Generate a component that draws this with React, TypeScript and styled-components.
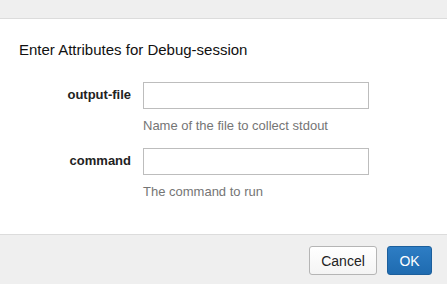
import styled, { createGlobalStyle } from "styled-components";

const GlobalStyle = createGlobalStyle`
  html, body {
    margin: 0;
    padding: 0;
    background: #ffffff;
  }
  body {
    font-family: "Liberation Sans", Arial, sans-serif;
    color: #222222;
  }
`;

const fields = [
  { name: "output-file", help: "Name of the file to collect stdout" },
  { name: "command", help: "The command to run" },
];

export default function App() {
  return (
    <>
      <GlobalStyle />
      <Frame>
        <TopBar />
        <Body>
          <Title>Enter Attributes for Debug-session</Title>
          <Form>
            {fields.map((f) => (
              <Field key={f.name}>
                <Label>{f.name}</Label>
                <Control>
                  <Input type="text" />
                  <Help>{f.help}</Help>
                </Control>
              </Field>
            ))}
          </Form>
        </Body>
        <Footer>
          <Button $width={68}>Cancel</Button>
          <Button $width={45} $primary>
            OK
          </Button>
        </Footer>
      </Frame>
    </>
  );
}

const Frame = styled.div`
  display: flex;
  flex-direction: column;
  width: 447px;
  height: 284px;
  overflow: hidden;
`;

const TopBar = styled.div`
  height: 18px;
  flex: none;
  background: #efefef;
  border-bottom: 1px solid #dcdcdc;
`;

const Body = styled.div`
  flex: 1;
  padding: 22px 19px 0;
  background: #ffffff;
`;

const Title = styled.h4`
  margin: 0;
  font-size: 15px;
  font-weight: normal;
  line-height: 18px;
  color: #111111;
`;

const Form = styled.div`
  display: flex;
  flex-direction: column;
  gap: 14px;
  margin-top: 23px;
`;

const Field = styled.div`
  display: grid;
  grid-template-columns: 112px 226px;
  column-gap: 12px;
  align-items: start;
`;

const Label = styled.label`
  text-align: right;
  font-size: 13px;
  font-weight: bold;
  line-height: 26px;
  color: #222222;
`;

const Control = styled.div`
  display: flex;
  flex-direction: column;
`;

const Input = styled.input`
  box-sizing: border-box;
  width: 226px;
  height: 27px;
  margin: 0;
  padding: 4px 6px;
  border: 1px solid #bdbdbd;
  border-radius: 0;
  font-family: inherit;
  font-size: 13px;
  outline: none;
`;

const Help = styled.span`
  margin-top: 9px;
  font-size: 13px;
  line-height: 16px;
  color: #757575;
`;

const Footer = styled.div`
  display: flex;
  justify-content: flex-end;
  gap: 10px;
  height: 50px;
  box-sizing: border-box;
  padding: 11px 15px 0;
  flex: none;
  background: #efefef;
  border-top: 1px solid #dcdcdc;
`;

const Button = styled.button<{ $primary?: boolean; $width: number }>`
  box-sizing: border-box;
  width: ${(p) => p.$width}px;
  height: 29px;
  padding: 0;
  font-family: inherit;
  font-size: 14px;
  border-radius: 3px;
  cursor: pointer;
  color: ${(p) => (p.$primary ? "#ffffff" : "#222222")};
  background: ${(p) =>
    p.$primary
      ? "linear-gradient(#2d7dc4, #1f6bb0)"
      : "linear-gradient(#ffffff, #f4f4f4)"};
  border: 1px solid ${(p) => (p.$primary ? "#1c5f9c" : "#b5b5b5")};
`;
